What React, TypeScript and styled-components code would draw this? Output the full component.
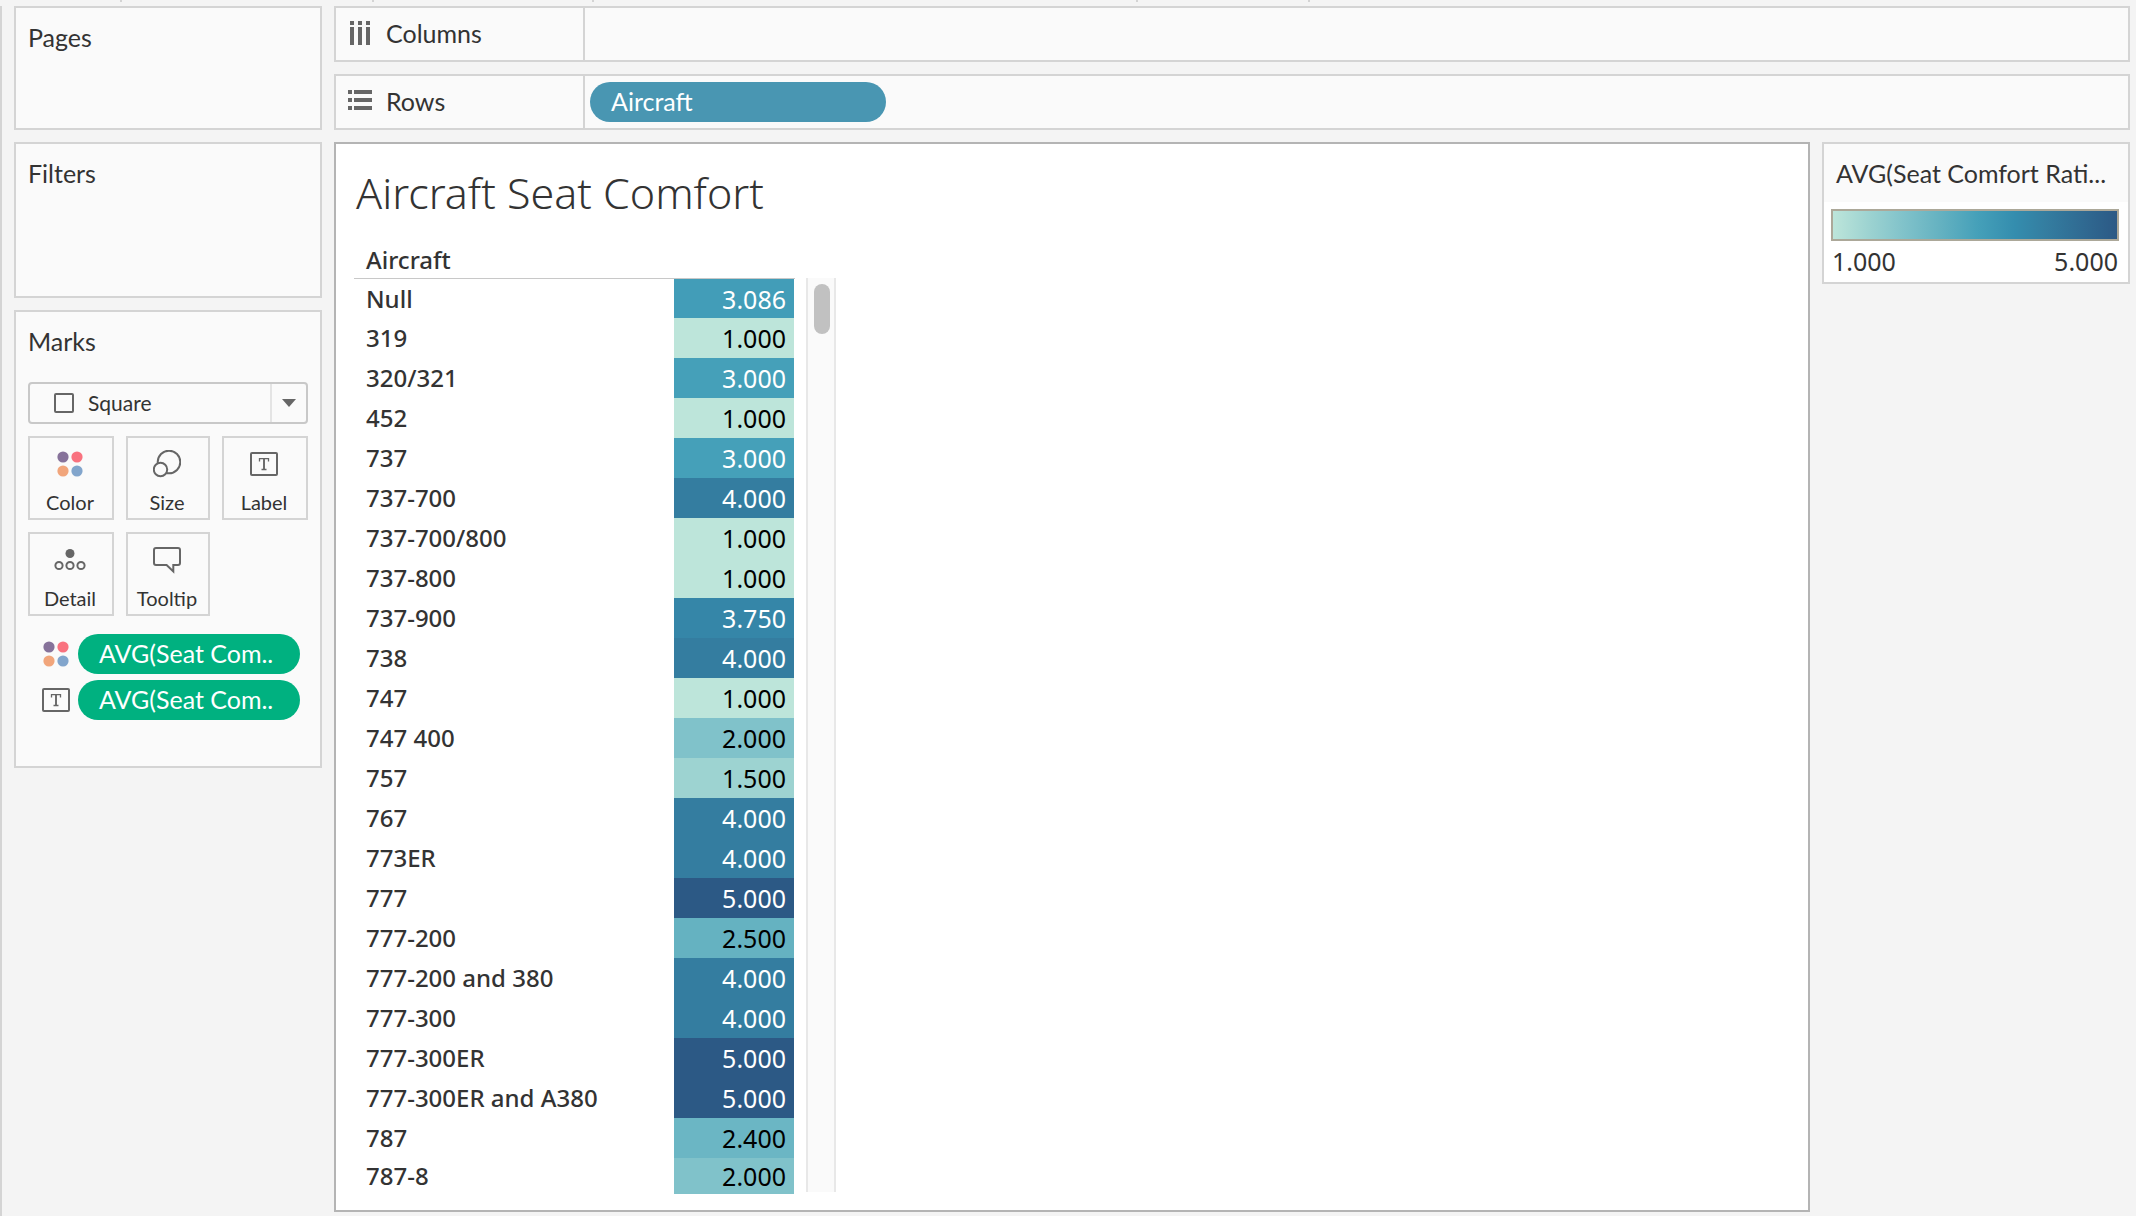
import React from "react";
import styled, { createGlobalStyle } from "styled-components";

const color = {
  page: "#f4f4f4",
  panel: "#fafafa",
  line: "#d4d4d4",
  sheetLine: "#b4b4b4",
  text: "#333333",
  icon: "#666666",
  measure: "#00b180",
  dimension: "#4996b2",
};

const uiFont = `Lato, "Liberation Sans", sans-serif`;
const vizFont = `"Noto Sans", "Open Sans", sans-serif`;

const GlobalStyle = createGlobalStyle`
  *, *::before, *::after { box-sizing: border-box; }
  body { margin: 0; background: ${color.page}; color: ${color.text}; font-family: ${uiFont}; }
  button, select { font-family: inherit; color: inherit; margin: 0; }
`;

const Page = styled.div`
  display: flex;
  flex-direction: column;
  min-height: 100vh;
`;

const TabEdges = styled.div`
  display: grid;
  grid-template-columns: 122px 252px 220px 544px 172px;
  height: 6px;
`;

const TabEdge = styled.span`
  height: 2px;
  border-right: 2px solid ${color.line};
`;

const Workspace = styled.div`
  flex: 1;
  display: grid;
  grid-template-columns: 308px minmax(0, 1fr);
  gap: 12px;
  padding: 0 6px 4px 12px;
  border-left: 2px solid ${color.line};
`;

const Sidebar = styled.aside`
  display: flex;
  flex-direction: column;
  gap: 12px;
`;

const Card = styled.section<{ $height: number }>`
  display: flex;
  flex-direction: column;
  min-height: ${(p) => p.$height}px;
  padding: 14px 12px;
  border: 2px solid ${color.line};
  background: ${color.panel};
`;

const CardTitle = styled.h2`
  margin: 0;
  font-size: 25px;
  font-weight: 400;
  line-height: 30px;
`;

const MarkType = styled.div`
  display: flex;
  align-items: center;
  height: 42px;
  margin: 26px 0 12px;
  padding-left: 24px;
  border: 2px solid #c8c8c8;
  border-radius: 4px;
  gap: 14px;
`;

const MarkSelect = styled.select`
  appearance: none;
  flex: 1;
  min-width: 0;
  height: 38px;
  padding: 0;
  border: 0;
  background: transparent;
  font-size: 21px;
  line-height: 38px;
`;

const SelectArrow = styled.span`
  display: flex;
  align-items: center;
  justify-content: center;
  width: 36px;
  height: 38px;
  margin-left: -14px;
  border-left: 2px solid #e4e4e4;
`;

const MarkGrid = styled.div`
  display: grid;
  grid-template-columns: 86fr 84fr 86fr;
  gap: 12px;
`;

const MarkButton = styled.button`
  display: flex;
  flex-direction: column;
  align-items: center;
  justify-content: space-between;
  height: 84px;
  padding: 12px 2px 2px 0;
  border: 2px solid ${color.line};
  background: ${color.panel};
  font-size: 20px;
  line-height: 28px;
`;

const Encodings = styled.ul`
  display: flex;
  flex-direction: column;
  gap: 6px;
  margin: 18px 8px 0 14px;
  padding: 0;
  list-style: none;
`;

const Encoding = styled.li`
  display: flex;
  align-items: center;
  gap: 8px;
`;

const EncodingIcon = styled.span`
  display: flex;
  justify-content: center;
  width: 28px;
`;

const Pill = styled.button<{ $tone: string; $width?: number }>`
  flex: ${(p) => (p.$width ? "none" : 1)};
  width: ${(p) => (p.$width ? `${p.$width}px` : "auto")};
  height: 40px;
  padding: 0 21px 2px;
  border: 0;
  border-radius: 20px;
  background: ${(p) => p.$tone};
  color: #ffffff;
  font-size: 25px;
  line-height: 38px;
  text-align: left;
  white-space: nowrap;
`;

const Main = styled.main`
  display: flex;
  flex-direction: column;
  gap: 12px;
  min-width: 0;
`;

const Shelf = styled.section`
  display: flex;
  height: 56px;
  border: 2px solid ${color.line};
  background: ${color.panel};
`;

const ShelfLabel = styled.h2`
  display: flex;
  align-items: center;
  gap: 12px;
  width: 249px;
  margin: 0;
  padding: 0 0 2px 12px;
  border-right: 2px solid ${color.line};
  font-size: 25px;
  font-weight: 400;
  line-height: 30px;
`;

const ShelfItems = styled.div`
  flex: 1;
  display: flex;
  align-items: flex-start;
  padding: 6px 5px;
`;

const Content = styled.div`
  flex: 1;
  display: grid;
  grid-template-columns: minmax(0, 1fr) 308px;
  align-items: start;
  gap: 12px;
`;

const Sheet = styled.section`
  align-self: stretch;
  padding: 25px 18px 16px;
  border: 2px solid ${color.sheetLine};
  background: #ffffff;
  font-family: ${vizFont};
`;

const SheetTitle = styled.h1`
  margin: 0 0 16px;
  padding-left: 2px;
  font-size: 43px;
  font-weight: 300;
  line-height: 48px;
`;

const VizArea = styled.div`
  display: flex;
  align-items: flex-end;
  gap: 11px;
`;

const Table = styled.table`
  width: 441px;
  border-collapse: separate;
  border-spacing: 0;
  table-layout: fixed;
  font-size: 24px;
  line-height: 34px;
`;

const FieldHeader = styled.th`
  height: 46px;
  padding: 8px 0 0 12px;
  border-bottom: 1px solid #c8c8c8;
  font-weight: 500;
  text-align: left;
`;

const RowHeader = styled.th<{ $height: number }>`
  height: ${(p) => p.$height}px;
  padding: 0 0 0 12px;
  font-weight: 500;
  text-align: left;
  white-space: nowrap;
`;

const ValueCell = styled.td<{ $fill: string; $dark: boolean }>`
  width: 121px;
  padding: 0 8px 0 0;
  border-right: 1px solid #ffffff;
  background: ${(p) => p.$fill};
  background-clip: padding-box;
  color: ${(p) => (p.$dark ? "#000000" : "#ffffff")};
  font-size: 25px;
  text-align: right;
`;

const ScrollTrack = styled.div`
  align-self: stretch;
  width: 30px;
  margin: 45px 0 2px;
  padding: 6px 4px 6px 6px;
  border: solid #e8e8e8;
  border-width: 0 2px;
  background: ${color.panel};
`;

const ScrollThumb = styled.div`
  width: 16px;
  height: 50px;
  border-radius: 8px;
  background: #c1c1c1;
`;

const Legend = styled.section`
  border: 2px solid ${color.line};
  background: #ffffff;
`;

const LegendTitle = styled.h2`
  margin: 0;
  padding: 14px 12px;
  background: ${color.panel};
  font-size: 25px;
  font-weight: 400;
  line-height: 30px;
  white-space: nowrap;
`;

const LegendBody = styled.div`
  padding: 7px 9px 5px 7px;
`;

const Ramp = styled.div`
  height: 32px;
  border: 2px solid #aca899;
  background: linear-gradient(
    to right,
    #bde5da, #9dd3d1 12.5%, #80c2ca 25%, #65b2c1 37.5%, #45a0b9 51%,
    #348dae 64%, #347da0 75%, #2c5985
  ) padding-box;
`;

const RampRange = styled.div`
  display: flex;
  justify-content: space-between;
  padding: 4px 1px 0;
  font-family: ${vizFont};
  font-size: 25px;
  line-height: 32px;
`;

const ColorDots = () => (
  <svg width="26" height="28" viewBox="0 0 26 28" aria-hidden="true">
    <circle cx="6" cy="7" r="5.6" fill="#86729a" />
    <circle cx="20" cy="7" r="5.6" fill="#f9727f" />
    <circle cx="6" cy="21" r="5.6" fill="#f1a57b" />
    <circle cx="20" cy="21" r="5.6" fill="#82a5cc" />
  </svg>
);

const SizeIcon = () => (
  <svg width="28" height="28" viewBox="0 0 28 28" fill="none" stroke={color.icon} strokeWidth="2" aria-hidden="true">
    <circle cx="16" cy="12" r="11.3" />
    <circle cx="7.5" cy="19.5" r="6.7" fill={color.panel} />
  </svg>
);

const LabelIcon = () => (
  <svg width="28" height="28" viewBox="0 0 28 28" fill="none" stroke={color.icon} aria-hidden="true">
    <rect x="1" y="3" width="26" height="22" rx="1" strokeWidth="2" />
    <path d="M9.5 11.5V8.7H18.5V11.5M11.5 19.5H16.5" strokeWidth="1.3" />
    <path d="M14 8.7V19.5" strokeWidth="1.9" />
  </svg>
);

const DetailIcon = () => (
  <svg width="32" height="28" viewBox="0 0 32 28" fill="none" stroke={color.icon} strokeWidth="2" aria-hidden="true">
    <circle cx="16" cy="7.5" r="4.5" fill={color.icon} stroke="none" />
    <circle cx="5" cy="19.5" r="3.6" />
    <circle cx="16" cy="19.5" r="3.6" />
    <circle cx="27" cy="19.5" r="3.6" />
  </svg>
);

const TooltipIcon = () => (
  <svg width="28" height="28" viewBox="0 0 28 28" fill="none" stroke={color.icon} strokeWidth="2" aria-hidden="true">
    <path d="M3 2H25Q27 2 27 4V17Q27 19 25 19H20.3V25.5L13.6 19H3Q1 19 1 17V4Q1 2 3 2Z" />
  </svg>
);

const SquareIcon = () => (
  <svg width="20" height="20" viewBox="0 0 20 20" fill="none" stroke={color.icon} strokeWidth="2" aria-hidden="true">
    <rect x="1" y="1" width="18" height="18" rx="1" />
  </svg>
);

const ArrowIcon = () => (
  <svg width="14" height="8" viewBox="0 0 14 8" fill={color.icon} aria-hidden="true">
    <path d="M0 0H14L7 8Z" />
  </svg>
);

const ColumnsIcon = () => (
  <svg width="26" height="24" viewBox="0 0 26 24" fill={color.icon} aria-hidden="true">
    <path d="M2 0h4v4H2zM10 0h4v4h-4zM18 0h4v4h-4zM2 6h4v18H2zM10 6h4v18h-4zM18 6h4v18h-4z" />
  </svg>
);

const RowsIcon = () => (
  <svg width="26" height="24" viewBox="0 0 26 24" fill={color.icon} aria-hidden="true">
    <path d="M0 1h4v4H0zM0 9h4v4H0zM0 17h4v4H0zM6 1h18v4H6zM6 9h18v4H6zM6 17h18v4H6z" />
  </svg>
);

const fills: Record<string, string> = {
  "1.000": "#bde5da",
  "1.500": "#9dd3d1",
  "2.000": "#80c2ca",
  "2.400": "#6bb6c4",
  "2.500": "#65b2c1",
  "3.000": "#45a0b9",
  "3.086": "#429db8",
  "3.750": "#3586a8",
  "4.000": "#347da0",
  "5.000": "#2c5985",
};

const rows: [string, string][] = [
  ["Null", "3.086"],
  ["319", "1.000"],
  ["320/321", "3.000"],
  ["452", "1.000"],
  ["737", "3.000"],
  ["737-700", "4.000"],
  ["737-700/800", "1.000"],
  ["737-800", "1.000"],
  ["737-900", "3.750"],
  ["738", "4.000"],
  ["747", "1.000"],
  ["747 400", "2.000"],
  ["757", "1.500"],
  ["767", "4.000"],
  ["773ER", "4.000"],
  ["777", "5.000"],
  ["777-200", "2.500"],
  ["777-200 and 380", "4.000"],
  ["777-300", "4.000"],
  ["777-300ER", "5.000"],
  ["777-300ER and A380", "5.000"],
  ["787", "2.400"],
  ["787-8", "2.000"],
];

const rowHeight = (i: number) => (i === 0 ? 39 : i === rows.length - 1 ? 36 : 40);

const markButtons = [
  { name: "Color", Icon: ColorDots },
  { name: "Size", Icon: SizeIcon },
  { name: "Label", Icon: LabelIcon },
  { name: "Detail", Icon: DetailIcon },
  { name: "Tooltip", Icon: TooltipIcon },
];

export default function App() {
  return (
    <>
      <GlobalStyle />
      <Page>
        <TabEdges>
          {[0, 1, 2, 3, 4].map((i) => (
            <TabEdge key={i} />
          ))}
        </TabEdges>
        <Workspace>
          <Sidebar>
            <Card $height={124}>
              <CardTitle>Pages</CardTitle>
            </Card>
            <Card $height={156}>
              <CardTitle>Filters</CardTitle>
            </Card>
            <Card $height={458}>
              <CardTitle id="marks-title">Marks</CardTitle>
              <MarkType>
                <SquareIcon />
                <MarkSelect aria-labelledby="marks-title" defaultValue="Square">
                  <option>Square</option>
                </MarkSelect>
                <SelectArrow>
                  <ArrowIcon />
                </SelectArrow>
              </MarkType>
              <MarkGrid>
                {markButtons.map(({ name, Icon }) => (
                  <MarkButton key={name} type="button">
                    <Icon />
                    {name}
                  </MarkButton>
                ))}
              </MarkGrid>
              <Encodings>
                <Encoding>
                  <EncodingIcon>
                    <ColorDots />
                  </EncodingIcon>
                  <Pill type="button" $tone={color.measure}>AVG(Seat Com..</Pill>
                </Encoding>
                <Encoding>
                  <EncodingIcon>
                    <LabelIcon />
                  </EncodingIcon>
                  <Pill type="button" $tone={color.measure}>AVG(Seat Com..</Pill>
                </Encoding>
              </Encodings>
            </Card>
          </Sidebar>
          <Main>
            <Shelf>
              <ShelfLabel>
                <ColumnsIcon />
                Columns
              </ShelfLabel>
              <ShelfItems />
            </Shelf>
            <Shelf>
              <ShelfLabel>
                <RowsIcon />
                Rows
              </ShelfLabel>
              <ShelfItems>
                <Pill type="button" $tone={color.dimension} $width={296}>Aircraft</Pill>
              </ShelfItems>
            </Shelf>
            <Content>
              <Sheet>
                <SheetTitle>Aircraft Seat Comfort</SheetTitle>
                <VizArea>
                  <Table>
                    <colgroup>
                      <col />
                      <col width={121} />
                    </colgroup>
                    <thead>
                      <tr>
                        <FieldHeader scope="col" colSpan={2}>Aircraft</FieldHeader>
                      </tr>
                    </thead>
                    <tbody>
                      {rows.map(([name, value], i) => (
                        <tr key={name}>
                          <RowHeader scope="row" $height={rowHeight(i)}>{name}</RowHeader>
                          <ValueCell $fill={fills[value]} $dark={Number(value) < 3}>{value}</ValueCell>
                        </tr>
                      ))}
                    </tbody>
                  </Table>
                  <ScrollTrack>
                    <ScrollThumb />
                  </ScrollTrack>
                </VizArea>
              </Sheet>
              <Legend>
                <LegendTitle>AVG(Seat Comfort Rati...</LegendTitle>
                <LegendBody>
                  <Ramp />
                  <RampRange>
                    <span>1.000</span>
                    <span>5.000</span>
                  </RampRange>
                </LegendBody>
              </Legend>
            </Content>
          </Main>
        </Workspace>
      </Page>
    </>
  );
}
